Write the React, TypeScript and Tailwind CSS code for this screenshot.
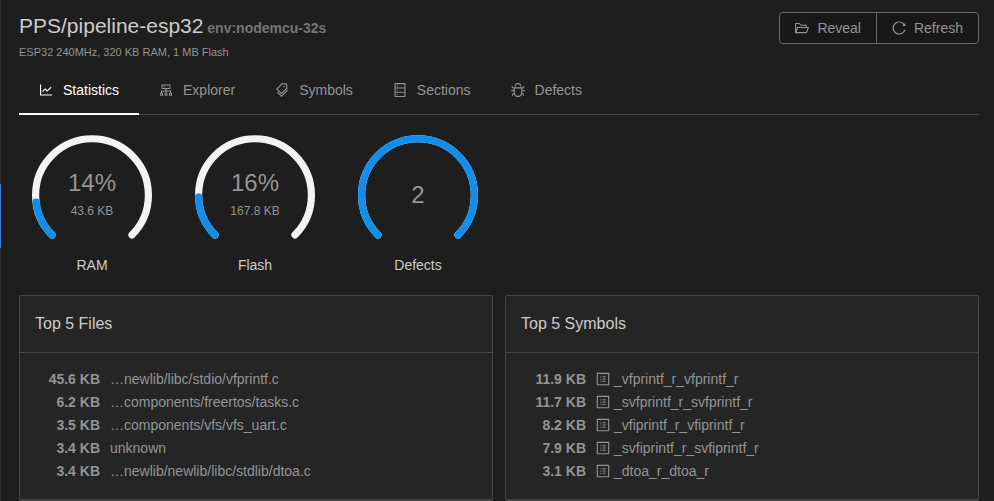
import type { ReactNode } from "react";
import type { IconType } from "react-icons";
import {
  AiOutlineBug,
  AiOutlineCluster,
  AiOutlineDatabase,
  AiOutlineFolderOpen,
  AiOutlineLineChart,
  AiOutlineProfile,
  AiOutlineReload,
  AiOutlineTags,
} from "react-icons/ai";

// Crops the empty margin of the 1024 unit icon grid
const ICON_BOX = "64 64 896 896";

const tabs: { label: string; icon: IconType }[] = [
  { label: "Statistics", icon: AiOutlineLineChart },
  { label: "Explorer", icon: AiOutlineCluster },
  { label: "Symbols", icon: AiOutlineTags },
  { label: "Sections", icon: AiOutlineDatabase },
  { label: "Defects", icon: AiOutlineBug },
];

const files = [
  ["45.6 KB", "…newlib/libc/stdio/vfprintf.c"],
  ["6.2 KB", "…components/freertos/tasks.c"],
  ["3.5 KB", "…components/vfs/vfs_uart.c"],
  ["3.4 KB", "unknown"],
  ["3.4 KB", "…newlib/newlib/libc/stdlib/dtoa.c"],
];

const symbols = [
  ["11.9 KB", "_vfprintf_r_vfprintf_r"],
  ["11.7 KB", "_svfprintf_r_svfprintf_r"],
  ["8.2 KB", "_vfiprintf_r_vfiprintf_r"],
  ["7.9 KB", "_svfiprintf_r_svfiprintf_r"],
  ["3.1 KB", "_dtoa_r_dtoa_r"],
];

// 270 degree arc, open at the bottom
const ARC = "M 10 85.9 A 56.4 56.4 0 1 1 90 85.9";

function Gauge({ label, percent, value, detail }: { label: string; percent: number; value: string; detail?: string }) {
  return (
    <figure className="flex w-[120px] flex-col items-center">
      <div className="grid size-[120px] place-items-center">
        <svg viewBox="-10 -14 120 120" className="col-start-1 row-start-1 size-[120px]" fill="none" strokeWidth="7.2" strokeLinecap="round">
          <path d={ARC} stroke="#f3f3f3" />
          <path d={ARC} stroke="#108ee9" pathLength={100} strokeDasharray={percent >= 100 ? undefined : `${percent} 200`} />
        </svg>
        <div className="col-start-1 row-start-1 text-center">
          <div className="text-2xl leading-8">{value}</div>
          {detail && <div className="text-xs leading-6">{detail}</div>}
        </div>
      </div>
      <figcaption className="leading-5 text-[#cccccc]">{label}</figcaption>
    </figure>
  );
}

function TopCard({ title, rows, icon }: { title: string; rows: string[][]; icon?: ReactNode }) {
  return (
    <section className="rounded-xs border border-b-2 border-[#454545] bg-[#252526]">
      <h2 className="border-b border-[#454545] px-[15px] py-4 text-base leading-6 text-[#cccccc]">{title}</h2>
      <div className="pt-[15px] pb-4 pl-[15px]">
        <table className="border-collapse">
          <tbody>
            {rows.map(([size, name]) => (
              <tr key={name} className="h-[23px] leading-[23px]">
                <th scope="row" className="w-[65px] p-0 text-right font-bold">{size}</th>
                <td className="p-0 pl-[10px]">
                  {icon}
                  {name}
                </td>
              </tr>
            ))}
          </tbody>
        </table>
      </div>
    </section>
  );
}

export default function App() {
  return (
    <div className="flex h-screen overflow-hidden bg-[#1e1e1e] font-['Liberation_Sans',Arial,sans-serif] text-sm text-[#949494]">
      <div className="w-px shrink-0 bg-[#333333] pt-[184px]">
        <div className="h-16 bg-[#3a7bd5]" />
      </div>
      <main className="min-w-0 flex-1 pt-3 pr-[15px] pl-[18px]">
        <header className="flex items-start justify-between">
          <div>
            <h1 className="text-[21px] leading-7 text-[#cccccc]">
              PPS/pipeline-esp32 <small className="-ml-0.5 text-sm font-bold text-[#757575]">env:nodemcu-32s</small>
            </h1>
            <p className="mt-1 text-[11px] leading-4">ESP32 240MHz, 320 KB RAM, 1 MB Flash</p>
          </div>
          <div className="flex">
            <button type="button" className="flex h-8 items-center gap-2 rounded-l border border-[#6b6b6b] bg-[#181818] px-[15px]">
              <AiOutlineFolderOpen viewBox={ICON_BOX} />
              Reveal
            </button>
            <button type="button" className="-ml-px flex h-8 items-center gap-2 rounded-r border border-[#6b6b6b] bg-[#181818] px-[15px]">
              <AiOutlineReload viewBox={ICON_BOX} />
              Refresh
            </button>
          </div>
        </header>

        <div role="tablist" className="mt-2 flex border-b border-[#454545]">
          {tabs.map(({ label, icon: Icon }, i) => (
            <button
              key={label}
              type="button"
              role="tab"
              aria-selected={i === 0}
              className={`-mb-px flex h-[47px] items-center gap-[10px] border-b-2 px-5 pb-px ${
                i === 0 ? "border-white text-white" : "border-transparent"
              }`}
            >
              <Icon viewBox={ICON_BOX} />
              {label}
            </button>
          ))}
        </div>

        <div className="mt-5 flex gap-[43px] px-[13px]">
          <Gauge label="RAM" percent={14} value="14%" detail="43.6 KB" />
          <Gauge label="Flash" percent={16} value="16%" detail="167.8 KB" />
          <Gauge label="Defects" percent={100} value="2" />
        </div>

        <div className="mt-5 grid grid-cols-2 gap-3">
          <TopCard title="Top 5 Files" rows={files} />
          <TopCard
            title="Top 5 Symbols"
            rows={symbols}
            icon={<AiOutlineProfile viewBox={ICON_BOX} className="mr-1 inline-block align-[-2px]" />}
          />
        </div>
      </main>
    </div>
  );
}
